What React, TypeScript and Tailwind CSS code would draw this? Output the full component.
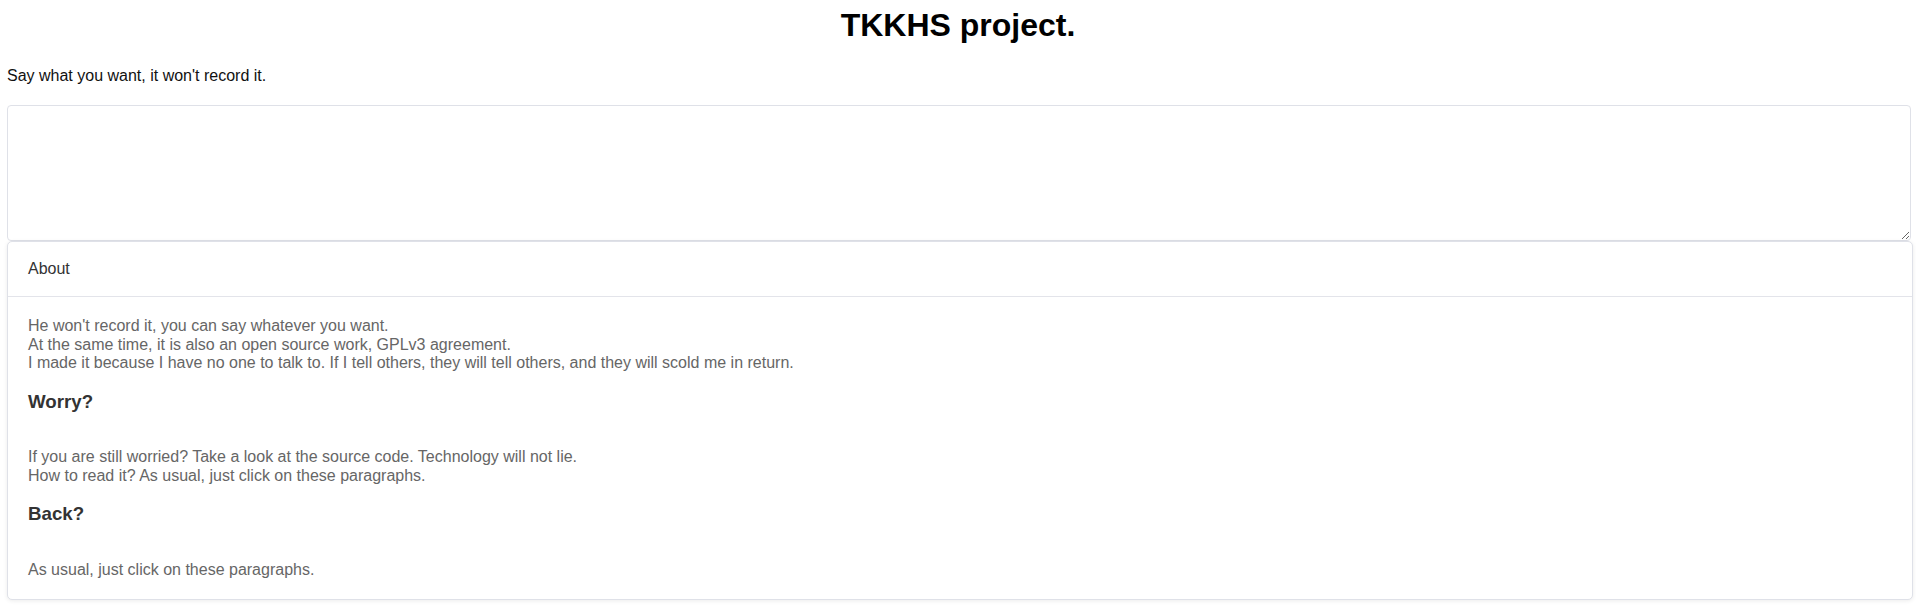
function About() {
  return (
    <div className="ml-[7px] w-[1906px] rounded-[5px] border border-[#dfe1e8] bg-white shadow-[0_1px_4px_rgba(0,0,0,0.08)]">
      <div className="border-b border-[#e3e4ea] px-5 py-[15px] text-base leading-6 text-[#333]">About</div>
      <div className="p-5 pb-[19px] text-base leading-[18.4px] text-[#666]">
        <p>
          He won't record it, you can say whatever you want.
          <br />
          At the same time, it is also an open source work, GPLv3 agreement.
          <br />
          I made it because I have no one to talk to. If I tell others, they will tell others, and they will scold me in return.
        </p>
        <h3 className="mt-[18px] text-[18.72px] font-bold leading-[21.5px] text-[#333]">Worry?</h3>
        <p className="mt-9">
          If you are still worried? Take a look at the source code. Technology will not lie.
          <br />
          How to read it? As usual, just click on these paragraphs.
        </p>
        <h3 className="mt-[18px] text-[18.72px] font-bold leading-[21.5px] text-[#333]">Back?</h3>
        <p className="mt-[37px]">As usual, just click on these paragraphs.</p>
      </div>
    </div>
  )
}

function App() {
  return (
    <div className="min-h-screen bg-white font-['Liberation_Sans',Arial,sans-serif] text-black">
      <h1 className="pt-[7px] text-center text-[32px] font-bold leading-[37px]">TKKHS project.</h1>
      <p className="ml-[7px] mt-[23px] text-base leading-[18.4px] text-[#111]">Say what you want, it won't record it.</p>
      <textarea className="ml-[7px] mt-[20px] block h-[136px] w-[1904px] rounded-[4px] border border-[#dfe1e8] bg-white p-2 outline-none"></textarea>
      <About />
    </div>
  )
}

export default App
